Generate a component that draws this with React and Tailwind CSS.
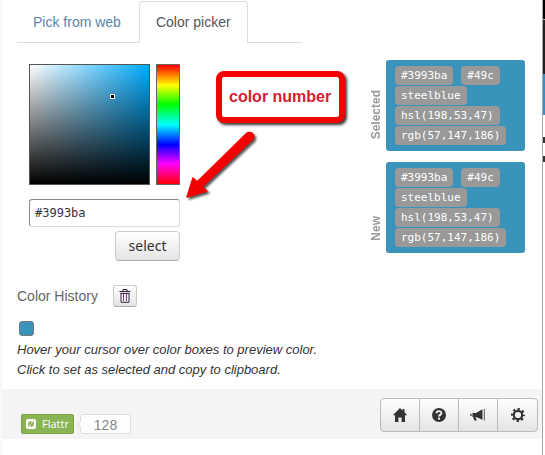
import React from 'react';

const codes = ['#3993ba', '#49c', 'steelblue', 'hsl(198,53,47)', 'rgb(57,147,186)'];

const ColorCard = ({ label }) => (
  <div className="flex items-end gap-1">
    <span className="mb-3 w-3 rotate-180 text-xs leading-3 font-bold text-[#999] [writing-mode:vertical-rl]">
      {label}
    </span>
    <div className="flex w-[139px] flex-wrap gap-x-2 gap-y-px rounded-[3px] bg-[#3993ba] px-[9px] py-[6px]">
      {codes.map((code) => (
        <code
          key={code}
          className="rounded-sm bg-[#999] px-[6px] font-['DejaVu_Sans_Mono',monospace] text-[11px] leading-[19px] text-white"
        >
          {code}
        </code>
      ))}
    </div>
  </div>
);

const HomeIcon = () => (
  <svg width="14" height="14" viewBox="0 0 14 14" fill="#333">
    <path d="M7 0 L9.5 2.4 V1 H11.5 V4.3 L14.3 7.2 H12 V14 H8.6 V9.5 H5.4 V14 H2 V7.2 H-0.3 Z" />
  </svg>
);

const HelpIcon = () => (
  <svg width="14" height="14" viewBox="0 0 14 14">
    <circle cx="7" cy="7" r="7" fill="#333" />
    <path d="M4.6 5.2 C4.6 2.4 9.4 2.4 9.4 5.2 C9.4 6.9 7 6.8 7 8.4" fill="none" stroke="#f4f4f4" strokeWidth="1.9" />
    <rect x="6" y="9.6" width="2" height="2" fill="#f4f4f4" />
  </svg>
);

const BullhornIcon = () => (
  <svg width="16" height="14" viewBox="0 0 16 14" fill="#333">
    <path d="M2.5 5 H6 L12.5 1.3 V11.8 L6 9 H5.6 L6.8 12.6 H4.3 L3.2 9 H2.5 Z" />
    <path d="M0.3 5.8 H1.6 V8 H0.3 Z" />
    <path d="M13.8 1 H15 V12.5 H13.8 Z" fill="#777" />
  </svg>
);

const CogIcon = () => (
  <svg width="14" height="14" viewBox="0 0 14 14" fill="none" stroke="#333">
    <circle cx="7" cy="7" r="4.2" strokeWidth="2.2" />
    <circle cx="7" cy="7" r="6" strokeWidth="2" strokeDasharray="2.3 2.412" strokeDashoffset="1.15" />
  </svg>
);

const TrashIcon = () => (
  <svg width="12" height="14" viewBox="0 0 12 14" fill="none" stroke="#3a2a44">
    <path d="M4 2 V0.5 H8 V2" />
    <path d="M0.5 2.5 H11.5" strokeWidth="1.2" />
    <path d="M1.5 4.5 H10.5 M2 4 V13.3 H10 V4" />
    <path d="M4.5 5 V12 M7.5 5 V12" stroke="#7a4a80" />
  </svg>
);

const tools = [
  { name: 'Home', Icon: HomeIcon },
  { name: 'Help', Icon: HelpIcon },
  { name: 'News', Icon: BullhornIcon },
  { name: 'Settings', Icon: CogIcon },
];

const Tabs = () => (
  <div className="mr-60 flex gap-[2px] border-b border-[#ddd] pt-px text-sm leading-5">
    <button className="px-4 pt-[11px] pb-[10px] text-[#5a86ab]">Pick from web</button>
    <button className="-mb-px rounded-t border border-b-0 border-[#ddd] bg-white px-4 pt-[10px] pb-[11px] text-[#555]">
      Color picker
    </button>
  </div>
);

const Picker = () => (
  <div className="ml-3 w-[151px]">
    <div className="flex justify-between">
      <div className="relative h-[121px] w-[121px] border border-[#555] bg-[linear-gradient(to_top,#000,transparent),linear-gradient(to_right,#fff,#00aaff)]">
        {/* Current colour marker */}
        <div className="absolute top-[29px] left-[80px] h-[5px] w-[5px] border border-white bg-black" />
      </div>
      <div className="h-[121px] w-6 border border-[#666] bg-[linear-gradient(to_bottom,#f00,#ff0_17%,#0f0_33%,#0ff_50%,#00f_67%,#f0f_83%,#f00)]" />
    </div>
    <input
      aria-label="Color"
      defaultValue="#3993ba"
      className="mt-[14px] block h-7 w-full rounded-[3px] border border-[#ddd] border-t-[#888] border-l-[#888] px-[5px] font-['DejaVu_Sans_Mono',monospace] text-xs text-[#333]"
    />
    <button className="mt-1 ml-auto block h-[30px] w-[65px] rounded border border-[#ccc] border-b-[#aaa] bg-linear-to-b from-white to-[#e4e4e4] font-['Noto_Sans',sans-serif] text-sm text-[#333]">
      select
    </button>
  </div>
);

// Red callout with the arrow pointing to the text box
const Callout = () => (
  <>
    <div className="absolute top-[71px] left-[214px] rounded-lg border-[6px] border-[#f40000] bg-white py-2 pr-2 pl-[7px] text-base font-bold text-[#d4202e] shadow-[2px_2px_3px_#333]">
      color number
    </div>
    <svg className="absolute top-[128px] left-[180px] drop-shadow-[2px_2px_1px_#555]" width="78" height="76" viewBox="0 0 78 76">
      <path
        d="M65 5 L15 54 L11 50 L5 69 L25 63 L20 59 L71 11"
        fill="#f40000"
        stroke="#f40000"
        strokeWidth="1.5"
        strokeLinejoin="round"
      />
      <circle cx="67.5" cy="8.5" r="4.8" fill="#f40000" />
    </svg>
  </>
);

const History = () => (
  <div className="mt-6">
    <div className="flex items-center gap-[15px]">
      <h2 className="text-sm text-[#666]">Color History</h2>
      <button aria-label="Clear history" className="flex h-[22px] w-6 items-center justify-center rounded-[3px] border border-[#ccc] border-b-[#aaa] bg-linear-to-b from-white to-[#e4e4e4]">
        <TrashIcon />
      </button>
    </div>
    <button aria-label="#3993ba" className="mt-[14px] ml-[2px] block h-[15px] w-[15px] rounded-[3px] border border-[#777] bg-[#3993ba]" />
    <p className="mt-1 text-[13px] leading-5 text-[#333] italic">
      Hover your cursor over color boxes to preview color.
      <br />
      Click to set as selected and copy to clipboard.
    </p>
  </div>
);

const Footer = () => (
  <footer className="mt-[9px] flex h-[50px] items-start justify-between bg-[#f4f4f4] pt-[9px] pr-1 pl-[19px]">
    <div className="flex gap-[6px] pt-4">
      <button className="flex h-5 w-[53px] items-center gap-[6px] rounded-[2px] border border-[#7ba048] bg-[#88b453] pl-1 font-['Open_Sans',sans-serif] text-[11px] font-medium text-white">
        <svg width="10" height="10" viewBox="0 0 10 10">
          <rect width="10" height="10" rx="2" fill="#fff" />
          <path d="M2.2 8.2 V4.4 Q2.2 2.4 4.2 2.2 L5.6 2.2 V4 L2.2 8.2 Z M7.8 1.8 V5.6 Q7.8 7.6 5.8 7.8 L4.4 7.8 V6 L7.8 1.8 Z" fill="#88b453" />
        </svg>
        Flattr
      </button>
      <span className="relative h-5 w-[51px] rounded-[3px] border border-[#ddd] bg-[#fdfdfd] text-center text-sm leading-5 text-[#888]">
        <span className="absolute top-[7px] -left-[3px] h-[5px] w-[5px] rotate-45 border-b border-l border-[#ddd] bg-[#fdfdfd]" />
        128
      </span>
    </div>
    <div className="flex h-[34px] divide-x divide-[#bbb] rounded border border-[#bbb] bg-linear-to-b from-white to-[#e4e4e4]">
      {tools.map(({ name, Icon }) => (
        <button key={name} aria-label={name} className="flex w-[39px] items-center justify-center">
          <Icon />
        </button>
      ))}
    </div>
  </footer>
);

// Sliver of the page that lies behind the popup
const PageEdge = () => (
  <div className="flex w-[3px] flex-col border-l border-[#aaa] bg-white">
    <div className="h-[19px] bg-black" />
    <div className="h-px bg-[#bbb]" />
    <div className="h-[54px] bg-[#222]" />
    <div className="h-[41px] bg-[#3a8fc4]" />
    <div className="h-[22px]" />
    <div className="h-[25px] border-y-6 border-[#333]" />
  </div>
);

export default function App() {
  return (
    <div className="flex min-h-screen bg-white font-['Liberation_Sans',Arial,sans-serif]">
      <main className="relative flex-1 border-l-2 border-[#f8f8f8]">
        <div className="pl-[15px]">
          <Tabs />
          <div className="flex items-start justify-between pr-[17px]">
            <div className="pt-[21px]">
              <Picker />
            </div>
            <div className="flex flex-col gap-[11px] pt-[17px]">
              <ColorCard label="Selected" />
              <ColorCard label="New" />
            </div>
          </div>
          <History />
        </div>
        <Footer />
        <Callout />
      </main>
      <PageEdge />
    </div>
  );
}
